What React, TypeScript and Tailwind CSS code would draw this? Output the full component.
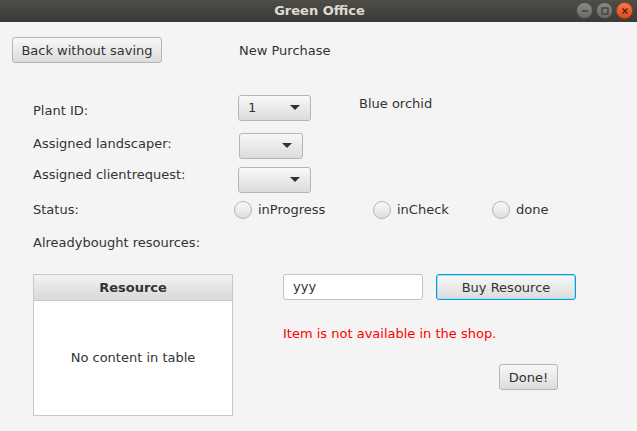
import React from 'react'

// Bouton style JavaFX Modena
function FxButton({ label, className = '', focused = false }: { label: string; className?: string; focused?: boolean }) {
  return (
    <button
      className={`h-[26px] rounded-[3px] border bg-gradient-to-b from-[#f8f8f8] to-[#dcdcdc] text-[13px] text-[#333] leading-none flex items-center justify-center ${
        focused ? 'border-[#039ed3] shadow-[inset_0_0_0_1px_#a6dcf0]' : 'border-[#b5b5b5]'
      } ${className}`}
    >
      {label}
    </button>
  )
}

function ComboBox({ value, className = '' }: { value?: string; className?: string }) {
  return (
    <div
      className={`h-[26px] rounded-[3px] border border-[#b5b5b5] bg-gradient-to-b from-[#f8f8f8] to-[#dcdcdc] flex items-center justify-between pl-[9px] pr-[10px] ${className}`}
    >
      <span className="text-[#333]">{value ?? ''}</span>
      <svg width="10" height="6" viewBox="0 0 10 6">
        <path d="M0 0 L10 0 L5 5 Z" fill="#333" />
      </svg>
    </div>
  )
}

function Radio({ label, className = '' }: { label: string; className?: string }) {
  return (
    <div className={`flex items-center gap-[6px] ${className}`}>
      <span className="w-[18px] h-[18px] rounded-full border border-[#b5b5b5] bg-gradient-to-b from-[#fafafa] to-[#dedede]" />
      <span>{label}</span>
    </div>
  )
}

function WindowButton({ kind }: { kind: 'min' | 'max' | 'close' }) {
  if (kind === 'close') {
    return (
      <span className="w-[17px] h-[17px] rounded-full bg-gradient-to-b from-[#f47a4a] to-[#df4a16] border border-[#b83c10] flex items-center justify-center">
        <svg width="8" height="8" viewBox="0 0 8 8">
          <path d="M1.5 1.5 L6.5 6.5 M6.5 1.5 L1.5 6.5" stroke="#5a1a05" strokeWidth="1.3" />
        </svg>
      </span>
    )
  }
  return (
    <span className="w-[17px] h-[17px] rounded-full bg-gradient-to-b from-[#8a8983] to-[#6a6964] border border-[#4a4944] flex items-center justify-center">
      <svg width="8" height="8" viewBox="0 0 8 8">
        {kind === 'min' ? (
          <path d="M1 4 L7 4" stroke="#3a3935" strokeWidth="1.3" />
        ) : (
          <rect x="1" y="1" width="6" height="6" fill="none" stroke="#3a3935" strokeWidth="1.2" />
        )}
      </svg>
    </span>
  )
}

export default function App() {
  return (
    <div className="w-[637px] h-[431px] overflow-hidden bg-[#f4f4f4] font-['DejaVu_Sans',sans-serif] text-[13px] leading-[16px] text-[#333]">
      {/* barre de titre */}
      <div className="h-[22px] bg-gradient-to-b from-[#4f4d48] to-[#3b3a36] flex items-center relative">
        <span className="flex-1 text-center font-bold text-[#dfdbd2] pl-[2px]">Green Office</span>
        <div className="absolute right-[4px] top-[2px] flex gap-[3px]">
          <WindowButton kind="min" />
          <WindowButton kind="max" />
          <WindowButton kind="close" />
        </div>
      </div>

      <div className="flex items-start pl-[12px] pt-[15px]">
        <FxButton label="Back without saving" className="w-[150px]" />
        <span className="ml-[77px] mt-[6px]">New Purchase</span>
      </div>

      <div className="pl-[33px] mt-[32px] flex flex-col">
        <div className="flex items-start h-[26px]">
          <span className="w-[205px] mt-[8px]">Plant ID:</span>
          <ComboBox value="1" className="w-[73px]" />
          <span className="ml-[48px] mt-[1px]">Blue orchid</span>
        </div>

        <div className="flex items-start h-[26px] mt-[12px]">
          <span className="w-[206px] mt-[3px]">Assigned landscaper:</span>
          <ComboBox className="w-[64px]" />
        </div>

        <div className="flex items-start h-[26px] mt-[8px]">
          <span className="w-[205px] mt-[0px]">Assigned clientrequest:</span>
          <ComboBox className="w-[73px]" />
        </div>

        <div className="flex items-center h-[18px] mt-[8px]">
          <span className="w-[201px]">Status:</span>
          <Radio label="inProgress" className="w-[139px]" />
          <Radio label="inCheck" className="w-[119px]" />
          <Radio label="done" />
        </div>

        <div className="mt-[16px]">Alreadybought resources:</div>

        <div className="flex items-start mt-[23px]">
          <div className="w-[200px] h-[142px] border border-[#c8c8c8] bg-white flex flex-col">
            <div className="h-[26px] bg-gradient-to-b from-[#f2f2f2] to-[#d9d9d9] border-b border-[#c8c8c8] flex items-center justify-center font-bold">
              Resource
            </div>
            <div className="flex-1 flex items-center justify-center">No content in table</div>
          </div>

          <div className="ml-[50px] flex flex-col">
            <div className="flex items-center">
              <div className="w-[140px] h-[26px] rounded-[3px] border border-[#c2c2c2] bg-white flex items-center pl-[9px]">
                yyy
              </div>
              <FxButton label="Buy Resource" focused className="w-[140px] ml-[13px]" />
            </div>
            <div className="mt-[26px] text-[#ff0000]">Item is not available in the shop.</div>
            <div className="mt-[22px] pl-[216px]">
              <FxButton label="Done!" className="w-[59px]" />
            </div>
          </div>
        </div>
      </div>
    </div>
  )
}
